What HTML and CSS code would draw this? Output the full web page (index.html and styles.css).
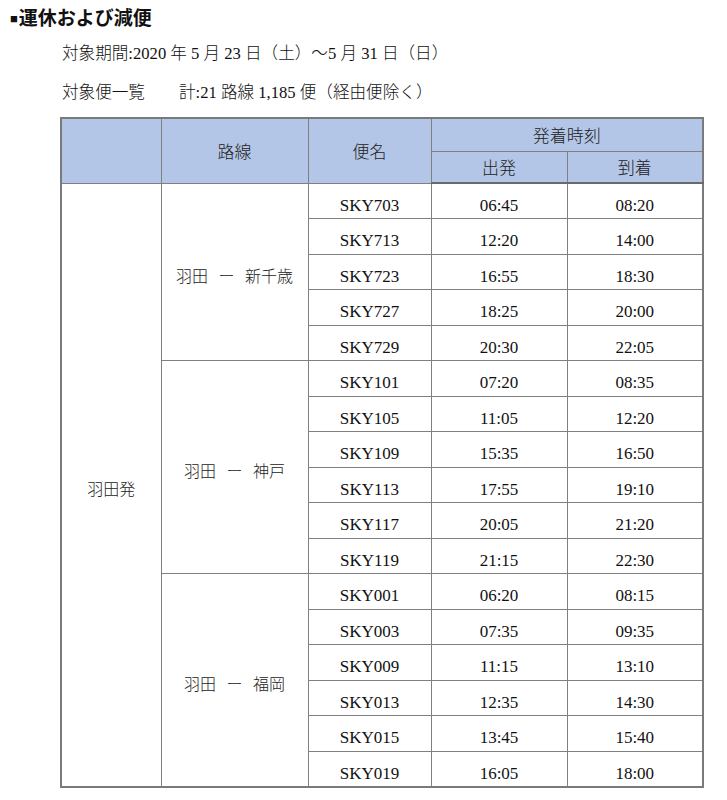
FILE: index.html
```html
<!DOCTYPE html>
<html lang="ja">
<head>
<meta charset="utf-8">
<link rel="stylesheet" href="styles.css">
</head>
<body>
<h1 class="title"><span class="sq">■</span>運休および減便</h1>
<p class="line l2">対象期間:2020 年 5 月 23 日（土）～5 月 31 日（日）</p>
<p class="line l3">対象便一覧<span class="gap">　</span>計:21 路線 1,185 便（経由便除く）</p>
<table class="tbl">
  <colgroup>
    <col class="c1"><col class="c2"><col class="c3"><col class="c4"><col class="c5">
  </colgroup>
  <thead>
    <tr class="h1">
      <th rowspan="2"></th>
      <th rowspan="2">路線</th>
      <th rowspan="2">便名</th>
      <th colspan="2">発着時刻</th>
    </tr>
    <tr class="h2">
      <th>出発</th>
      <th>到着</th>
    </tr>
  </thead>
  <tbody>
    <tr><td rowspan="17" class="jp">羽田発</td><td rowspan="5" class="jp">羽田 ー 新千歳</td><td class="num">SKY703</td><td class="num">06:45</td><td class="num">08:20</td></tr>
    <tr><td class="num">SKY713</td><td class="num">12:20</td><td class="num">14:00</td></tr>
    <tr><td class="num">SKY723</td><td class="num">16:55</td><td class="num">18:30</td></tr>
    <tr><td class="num">SKY727</td><td class="num">18:25</td><td class="num">20:00</td></tr>
    <tr><td class="num">SKY729</td><td class="num">20:30</td><td class="num">22:05</td></tr>
    <tr><td rowspan="6" class="jp">羽田 ー 神戸</td><td class="num">SKY101</td><td class="num">07:20</td><td class="num">08:35</td></tr>
    <tr><td class="num">SKY105</td><td class="num">11:05</td><td class="num">12:20</td></tr>
    <tr><td class="num">SKY109</td><td class="num">15:35</td><td class="num">16:50</td></tr>
    <tr><td class="num">SKY113</td><td class="num">17:55</td><td class="num">19:10</td></tr>
    <tr><td class="num">SKY117</td><td class="num">20:05</td><td class="num">21:20</td></tr>
    <tr><td class="num">SKY119</td><td class="num">21:15</td><td class="num">22:30</td></tr>
    <tr><td rowspan="6" class="jp">羽田 ー 福岡</td><td class="num">SKY001</td><td class="num">06:20</td><td class="num">08:15</td></tr>
    <tr><td class="num">SKY003</td><td class="num">07:35</td><td class="num">09:35</td></tr>
    <tr><td class="num">SKY009</td><td class="num">11:15</td><td class="num">13:10</td></tr>
    <tr><td class="num">SKY013</td><td class="num">12:35</td><td class="num">14:30</td></tr>
    <tr><td class="num">SKY015</td><td class="num">13:45</td><td class="num">15:40</td></tr>
    <tr><td class="num">SKY019</td><td class="num">16:05</td><td class="num">18:00</td></tr>
  </tbody>
</table>
</body>
</html>
```
FILE: styles.css
```css
html, body {
  margin: 0;
  padding: 0;
  background: #ffffff;
}
body {
  padding: 5px 0 0 10px;
  color: #111111;
  font-family: "Liberation Serif", "Noto Sans CJK JP", serif;
}
.title {
  margin: 0;
  font-family: "Noto Sans CJK JP", sans-serif;
  font-size: 19px;
  line-height: 24px;
  height: 24px;
  font-weight: 700;
}
.sq {
  font-family: "Liberation Serif", serif;
  font-size: 13px;
  vertical-align: 2px;
  margin-right: 1px;
}
.line {
  margin: 0 0 0 52px;
  font-size: 16.6px;
  line-height: 22px;
  height: 22px;
  font-weight: 300;
  white-space: nowrap;
}
.l2 { margin-top: 14px; }
.l3 { margin-top: 17px; }
.gap {
  display: inline-block;
  width: 34px;
}
.tbl {
  margin: 13px 0 0 50px;
  border-collapse: collapse;
  width: 642px;
  table-layout: fixed;
  border: 2px solid #7a7a7a;
}
.c1 { width: 100px; }
.c2 { width: 147px; }
.c3 { width: 123px; }
.c4 { width: 136px; }
.c5 { width: 136px; }
.tbl th, .tbl td {
  border: 1px solid #808080;
  padding: 0;
  text-align: center;
  vertical-align: middle;
}
.tbl th {
  background: #b4c6e7;
  font-family: "Noto Sans CJK JP", sans-serif;
  font-weight: 300;
  font-size: 17px;
  color: #222222;
}
.tbl thead tr.h1 { height: 33px; }
.tbl thead tr.h2 { height: 32px; }
.tbl thead tr.h2 th { border-bottom: 2px solid #6a6a6a; }
.tbl tbody tr { height: 35.5px; }
.tbl td {
  padding-top: 10px;
}
.tbl td.jp {
  font-family: "Noto Sans CJK JP", sans-serif;
  font-weight: 300;
  font-size: 16px;
  word-spacing: 7px;
  color: #222222;
  padding-top: 6px;
}
.tbl td.num {
  font-family: "Liberation Serif", serif;
  font-size: 17px;
}
```
